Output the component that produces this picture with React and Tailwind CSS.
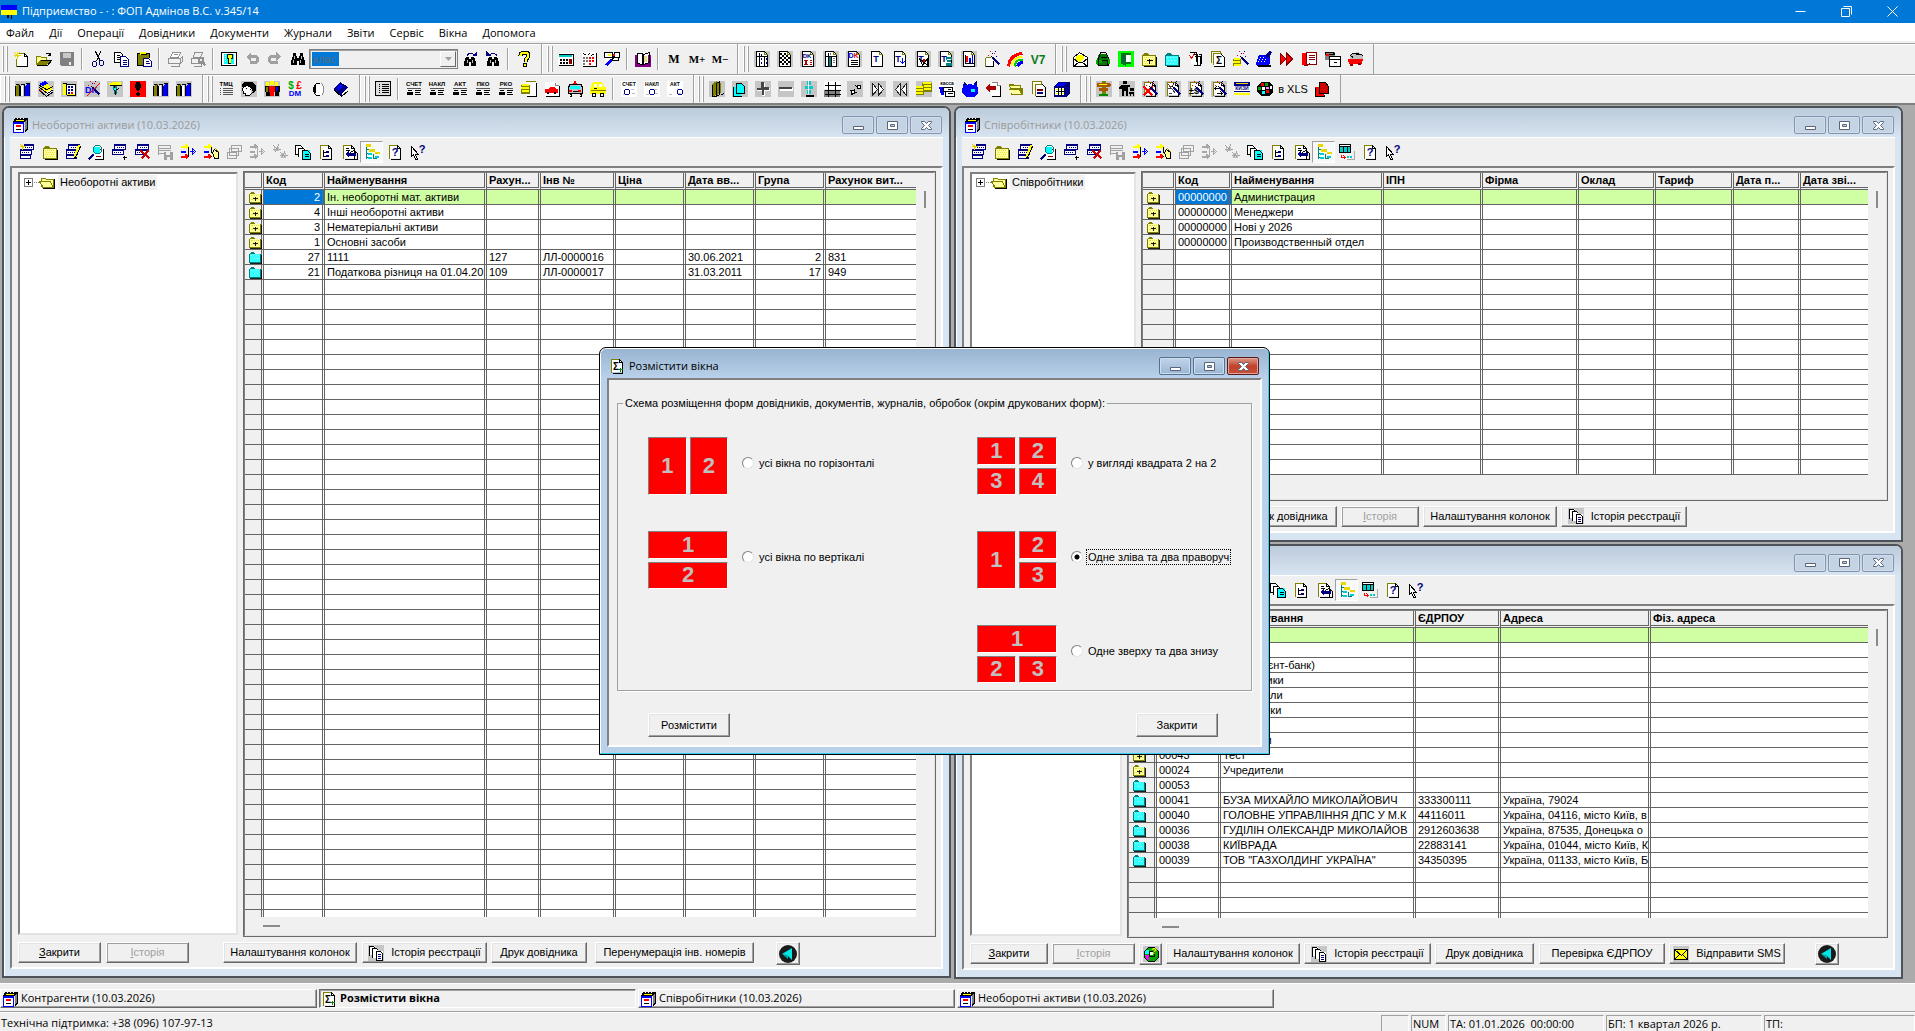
import React from 'react';

const UI = 'font-["Open_Sans","Noto_Sans",sans-serif]';

/* ---------- pixel icons, 16x16 grid ---------- */
// [color, path] is a fill, [color, path, width] a stroke, ['t', color, text, x, y, size] a caption

const BG = ['#c6c6c6', 'M0 0h16v16h-16z'];
const WBG = ['#fff', 'M0 0h16v16h-16z'];
const PAGE = [
  ['#fff', 'M2 1h8l4 4v11h-12z'],
  ['#000', 'M2 0h8l3 3v12h-11z', 1],
  ['#808000', 'M10 0v3h3', 1],
];
const SHEET = [
  ['#fff', 'M3 2h7l3 3v9h-10z'],
  ['#808000', 'M2 14v-13h8', 1],
  ['#000', 'M3 15h10v-11l-3 -3v3h3', 1],
];
const WAND = [
  ['#000080', 'M8 6l7 7', 2],
  ['#000', 'M7 5l2 2', 1],
  ['#f00', 'M6 0h1v1h-1zM10 2h1v1h-1zM4 4h1v1h-1z'],
  ['#000080', 'M8 2h1v1h-1zM11 0h1v1h-1zM12 5h1v1h-1z'],
];
const FOLDER = [
  ['#808000', 'M1 4h1v-1h1v-1h4v1h1v1h7v11h-14z'],
  ['#ffff9c', 'M2 5h12v9h-12z'],
  ['#e8e040', 'M3 6h1v1h-1zM5 6h1v1h-1zM7 6h1v1h-1zM9 6h1v1h-1zM11 6h1v1h-1zM4 8h1v1h-1zM6 8h1v1h-1zM8 8h1v1h-1zM10 8h1v1h-1zM12 8h1v1h-1zM3 10h1v1h-1zM5 10h1v1h-1zM7 10h1v1h-1zM9 10h1v1h-1zM11 10h1v1h-1zM4 12h1v1h-1zM6 12h1v1h-1zM8 12h1v1h-1zM10 12h1v1h-1z'],
  ['#000', 'M15 5v10h-13', 1],
];
const CFOLDER = [
  ['#008080', 'M1 4h1v-1h1v-1h4v1h1v1h7v11h-14z'],
  ['#3ff', 'M2 5h12v9h-12z'],
  ['#b0ffff', 'M3 6h1v1h-1zM6 6h1v1h-1zM9 6h1v1h-1zM12 6h1v1h-1zM4 9h1v1h-1zM7 9h1v1h-1zM10 9h1v1h-1zM3 12h1v1h-1zM6 12h1v1h-1zM9 12h1v1h-1z'],
  ['#000', 'M15 5v10h-13', 1],
];
const CARDS = [
  ['#000080', 'M3 0h12v6h-12z'],
  ['#fff', 'M4 2h10v3h-10z'],
  ['#000080', 'M1 5h12v6h-12z'],
  ['#fff', 'M2 7h10v3h-10z'],
  ['#000080', 'M6 3h1v1h-1zM8 3h1v1h-1zM10 3h1v1h-1zM12 3h1v1h-1zM3 8h1v1h-1zM5 8h1v1h-1zM7 8h1v1h-1zM9 8h1v1h-1z'],
];
const BINOC = [
  ['#000', 'M3 2h3v3h1v2h2v-2h1v-3h3v3l2 5v4h-6v-4h-2v4h-6v-4l2 -5z'],
  ['#c0c0c0', 'M4 5h1v3h-1zM3 9h1v3h-1zM11 5h1v3h-1zM10 9h1v3h-1z'],
];
const SMALL_BINOC = [
  ['#000', 'M4 6h3v2h2v-2h3l2 5v4h-5v-4h-2v4h-5v-4z'],
  ['#c0c0c0', 'M5 9h1v3h-1zM10 9h1v3h-1z'],
];
const arrows3 = (a, b, c, d) => [
  [a, 'M0 2h5M5 0l2 2l-2 2', 2],
  [b, 'M0 7h5', 2],
  [c, 'M0 12h5M5 10l2 2l-2 2', 2],
  ['#000', 'M8 2v10', 1],
  [d, 'M9 7h4M12 4l3 3l-3 3z', 1],
];
const MAN = ['#000', 'M2 9h4v1h-4zM1 11h6v3h-6zM9 9h6v1h-6zM9 11h5v1h-5zM9 13h6v1h-6z'];
const doc = (label, extra) => [['t', '#000', label, 8, 5, 6], ...(extra || [MAN, ['#555', 'M1 7h14v1h-14z']])];
const docW = (label, x) => [WBG, ['t', '#000', label, 8, 5, 5], ['#bbb', 'M10 8h3v1h-3zM2 13h3v1h-3zM11 12h3v1h-3z'], ['#000080', `M${x} 8h3l1 1v3l-1 1h-3l-1 -1v-3z`, 1]];
const BINDERS = [
  BG,
  ['#808000', 'M1 5l2 -2h2v12h-4z'],
  ['#000', 'M4 4h1v11h-1zM0 5h1v10h-1zM1 3h3v1h-3z'],
  ['#fff', 'M6 6l2 -3v12h-2z'],
  ['#000', 'M5 5h1v10h-1zM9 3h1v12h-1zM6 3h3v1h-3z'],
  ['#00f', 'M10 6l3 -4h1v13h-4z'],
  ['#000080', 'M14 2h1v13h-1z'],
  ['#000', 'M11 2h4v1h-4z'],
];
const T = x => [...PAGE, ['t', '#000080', 'T', x, 11, 9]];

const ICONS = {
  flag: [['#00f', 'M0 1h16v5h-16z'], ['#ff0', 'M0 6h16v5h-16z'], ['#000', 'M6 11h2v3h-2zM10 11h1v4h-1z']],
  new: [['#fff', 'M3 2h8l3 3v10h-11z'], ['#808000', 'M3 7v8M5 2h6', 1], ['#000', 'M3 15h11v-10h-3v-3l3 3', 1], ['#e8d800', 'M4 0v7M0 4h7M1 1l5 5M6 1l-5 5', 1]],
  open: [['#808000', 'M0 5h4l1 1h6v8h-11z'], ['#ff9', 'M1 6h3l1 1h5v2h-6l-3 4z'], ['#808000', 'M4 9h11l-4 5h-10z'], ['#000', 'M4 9h11l-4 5h-11M9 3q3 -3 5 1M14 1v3h-3', 1]],
  save: [['#808080', 'M1 1h14v14h-13l-1 -1z'], ['#c8c8c8', 'M4 2h8v5h-8z'], ['#eee', 'M10 11h2v3h-2z']],
  cut: [['#000', 'M5 0l5 10M10 0l-4 10', 1], ['#000080', 'M3 10h2l1 1v3l-1 1h-2l-1 -1v-3zM10 9h2l1 1v3l-1 1h-2l-1 -1v-3z', 1]],
  copy: [['#fff', 'M1 1h8v10h-8z'], ['#000', 'M1 1h6l2 2v8h-8zM3 4h3M3 6h4M3 8h4', 1], ['#fff', 'M7 5h8v10h-8z'], ['#000080', 'M7 5h5l3 3v7h-8zM9 9h4M9 11h4M9 13h4', 1]],
  paste: [['#808000', 'M1 2h12v12h-12z'], ['#000', 'M1 2h12v12h-12z', 1], ['#ff0', 'M4 1h6v3h-6z'], ['#000', 'M4 3h6', 1], ['#fff', 'M7 7h8v8h-8z'], ['#000080', 'M7 7h5l3 3v5h-8zM9 10h3M9 12h4', 1]],
  print: [['#fff', 'M4 2h9v5h-9z'], ['#909090', 'M5 1h8l-2 5h-8zM1 7h12v5h-12zM13 7l2 -2v5l-2 2M3 12h9v3h-9M6 3h4', 1]],
  preview: [['#909090', 'M4 1h8l-2 5h-7zM1 7h11v5h-11zM3 12h8v3h-8', 1], ['#eee', 'M9 6h4v4h-4z'], ['#909090', 'M8 6h4v4h-4zM12 10l3 4', 2]],
  key: [['#fff', 'M0 1h16v14h-16z'], ['#000', 'M0 1h15v13h-15z', 1], ['#0ff', 'M3 3h10v10h-10z'], ['#fff', 'M4 4h1v1h-1zM4 6h1v1h-1zM4 8h1v1h-1zM4 10h1v1h-1z'], ['#000', 'M6 3h6v5h-2v5h-3v-5h-1z'], ['#ff0', 'M7 4h4v3h-1v5h-2v-5h-1z']],
  undo: [['#a0a0a0', 'M6 5h5q2 0 2 3t-2 3h-6', 3], ['#a0a0a0', 'M7 1v9l-5 -4z']],
  redo: [['#a0a0a0', 'M9 5h-5q-2 0 -2 3t2 3h6', 3], ['#a0a0a0', 'M9 1v9l5 -4z']],
  binoc: BINOC,
  binocNext: [...SMALL_BINOC, ['#000080', 'M4 5q2 -5 8 -2', 1], ['#000080', 'M10 5h5v-5z']],
  binocPrev: [...SMALL_BINOC, ['#000080', 'M12 5q-2 -5 -8 -2', 1], ['#000080', 'M6 5h-5v-5z']],
  help: [['#000', 'M4 4q0 -3 4 -3t4 3q0 2 -3 4v2', 4], ['#ff0', 'M4 4q0 -3 4 -3t4 3q0 2 -3 4v2', 2], ['#000', 'M7 12h4v4h-4z'], ['#ff0', 'M8 13h2v2h-2z']],
  calc: [['#fff', 'M0 2h16v12h-16z'], ['#000', 'M0 14h15v-12M0 3h15', 1], ['#0cc', 'M1 4h13v2h-13z'], ['#000', 'M2 8h2v2h-2zM5 8h2v2h-2zM8 8h2v2h-2zM2 11h2v2h-2zM5 11h2v2h-2zM8 11h2v2h-2z'], ['#800', 'M11 8h3v5h-3z']],
  calc2: [['#fff', 'M1 1h14v14h-14z'], ['#000', 'M1 15h14v-14M2 2l3 2M6 4l2 -2M10 4l3 -2', 1], ['#777', 'M2 6h2v2h-2zM5 6h2v2h-2zM2 9h2v2h-2zM5 9h2v2h-2zM2 12h2v2h-2z'], ['#f00', 'M8 6h2v2h-2zM11 6h2v2h-2zM8 9h2v2h-2zM11 9h2v2h-2zM8 12h2v2h-2z']],
  kit: [['#fff', 'M1 2h14v8h-14z'], ['#000', 'M0 1h8v5h-8zM10 1h5v5h-5zM8 9h6v-4', 1], ['#f00', 'M9 3h2v3h-2z'], ['#ff0', 'M4 3h3v2h-3z'], ['#00f', 'M7 8l-5 6', 3], ['#000', 'M10 5l-3 4', 2]],
  book: [['#800080', 'M0 4h3v9h4l1 1l1 -1h4v-9h3v12h-16z'], ['#fff', 'M2 2l5 -1l1 2l5 -2v11l-5 1l-6 -1z'], ['#000', 'M2 2v10l5 1v-11zM8 3v10l6 -2v-10z', 1], ['#e8e080', 'M9 5h3v6h-3z']],
  m: [['t', '#000', 'M', 8, 12, 12, 'serif']],
  mp: [['t', '#000', 'M+', 8, 12, 11, 'serif']],
  mm: [['t', '#000', 'M−', 8, 12, 11, 'serif']],
  grid1: [BG, ...PAGE, ['#000', 'M5 1v14M10 4v11M2 5h11', 1], ['#000080', 'M7 3h1v2h-1zM7 7h1v2h-1zM7 11h1v2h-1zM12 7h1v2h-1zM12 11h1v2h-1z']],
  check: [BG, ...PAGE, ['#000', 'M3 2h2v2h-2zM7 2h2v2h-2zM5 4h2v2h-2zM9 4h2v2h-2zM3 6h2v2h-2zM7 6h2v2h-2zM11 6h2v2h-2zM5 8h2v2h-2zM9 8h2v2h-2zM3 10h2v2h-2zM7 10h2v2h-2zM11 10h2v2h-2zM5 12h2v2h-2zM9 12h2v2h-2z']],
  dk1: [BG, ...PAGE, ['t', '#000080', 'DK', 7, 7, 6], ['#a00', 'M4 9h4v1h-4zM5 10h2v3h-2zM4 13h4v1h-4zM10 9h2v1h-2zM10 11h2v1h-2zM10 13h2v1h-2z']],
  grid2: [BG, ...PAGE, ['#008080', 'M5 6h3v9h-3z'], ['#000', 'M5 1v14M8 5v10M2 5h11', 1], ['#777', 'M10 7h2v1h-2zM10 9h2v1h-2zM10 11h2v1h-2zM7 2h1v2h-1z']],
  dk2: [BG, ...PAGE, ['t', '#00f', 'D', 5, 7, 7], ['t', '#f00', 'K', 10, 7, 7], ['#000', 'M4 9h7M4 11h7M4 13h7', 1]],
  t1: T(7), t2: [...T(6), ['#00f', 'M10 6v6M8 10l2 2l2 -2', 1]],
  t3: [BG, ...T(6), ['#000', 'M4 7l8 7v-7l-5 7z', 1], ['#c00', 'M8 8h2v3h-2z']],
  t4: [BG, ...T(6), ['#008080', 'M8 6h6v3h-1v3h1v3h-6v-3h1v-3h-1z'], ['#fff', 'M9 8h4v1h-4zM9 11h4v1h-4z']],
  chart: [BG, ...PAGE, ['#000', 'M4 3v9h8', 1], ['#f00', 'M5 5h2v6h-2z'], ['#00f', 'M8 7h2v5h-2zM11 4h1v8h-1z']],
  wand: [['#fff', 'M1 7h8v8h-8z'], ['#808000', 'M1 6h5M1 6v9', 1], ['#000', 'M1 15h8v-6', 1], ...WAND],
  rainbow: [['#f00', 'M1 15q1 -12 14 -13', 3], ['#ff0', 'M4 15q1 -9 11 -10', 2], ['#0c0', 'M7 15q1 -7 8 -7', 2], ['#00f', 'M10 15q1 -4 5 -4', 3]],
  v7: [['t', '#0a7a1a', 'V7', 8, 13, 12]],
  mail: [['#fff', 'M1 6l7 -5l7 5v9h-14z'], ['#ff0', 'M4 5l8 -2v5l-4 3l-5 -2z'], ['#000', 'M1 6l6 -5l8 5v9h-14zM1 7l5 4l-5 4M15 7l-5 4l5 4M6 11h4', 1]],
  bag: [['#070', 'M4 3h8l2 5v6h-12v-6z'], ['#000', 'M5 1h5l3 5v8h-10v-7zM5 6h6M5 9h7v4', 1], ['#0a0', 'M4 9h3v3h-3zM1 9h2v4h-2zM13 8h2v5h-2z']],
  door: [['#0f0', 'M0 0h16v16h-16z'], ['#070', 'M3 2h10v11h-10z'], ['#fff', 'M8 4h5v7h-5z'], ['#0a6a3a', 'M3 2l5 3v10l-5 -3z']],
  folderPlus: [...FOLDER, ['#000', 'M8 7v5M5 9h6', 1]],
  folderCyan: CFOLDER,
  folderYellow: FOLDER,
  pages: [['#fff', 'M4 1h9v12h-9z'], ['#000', 'M2 1h7v9M5 3h5v10M7 5h6v9h-7M11 3h3v9', 1], ['#f00', 'M2 4l2 3l3 -5', 1]],
  sigma: [['#fff', 'M3 3h11v12h-11z'], ['#808000', 'M1 11v-11h9v2M3 13v-11h8', 1], ['#000', 'M3 15h11v-9l-3 -3', 1], ['t', '#000', 'Σ', 9, 13, 10]],
  coinsWand: [['#808000', 'M0 8h8v7h-8z'], ['#ff0', 'M1 7h6v2h-6zM0 10h7v2h-7zM1 13h7v2h-7z'], ...WAND],
  tax: [['#00f', 'M3 4h8l3 3v6l-4 2h-9l-1 -2z'], ['#fff', 'M4 6h1v1h-1zM7 6h1v1h-1zM3 8h1v1h-1zM6 8h1v1h-1zM9 8h1v1h-1zM2 10h1v1h-1zM5 10h1v1h-1zM8 10h1v1h-1z'], ['#000080', 'M9 5l4 -5l3 1l-3 6z'], ['#000', 'M1 14h13', 2]],
  ff: [['#800000', 'M1 1l6 7l-6 7zM7 1l7 7l-7 7z'], ['#f00', 'M2 4l4 4l-4 4zM8 4l4 4l-4 4z']],
  redbook: [['#f00', 'M0 2h5v12h-5z'], ['#fff', 'M4 1h10v12h-10z'], ['#800', 'M4 1h10v12h-10zM6 4h6M6 6h6M6 8h6M1 14h4l2 -2', 1]],
  files: [['#808080', 'M0 1h10v8h-10z'], ['#000', 'M0 1h8l1 2h-9z', 1], ['#f00', 'M1 3h3v2h-3z'], ['#fff', 'M4 5h12v11h-12z'], ['#000', 'M4 5h11v10h-11zM4 8h11M8 11h3', 1]],
  bus: [['#c0c0c0', 'M2 3l8 -2l5 3v4l-13 5z'], ['#000', 'M1 5l3 -3h5l6 2M3 5l2 1M7 3h3', 1], ['#f00', 'M0 8h15l-1 5h-13z'], ['#800', 'M2 13h3v2h-3zM10 12h3v2h-3z']],

  binders: BINDERS,
  cubes: [BG, ['#00f', 'M1 3l6 -3l4 3l-4 3z'], ['#ff0', 'M4 6l5 -3l5 3v3l-5 3l-5 -3z'], ['#f00', 'M1 8l5 4v3l-5 -5z'], ['#fff', 'M8 11l7 -3v2l-6 4z'], ['#000', 'M1 4l7 4l7 -3M1 6l8 6l6 -4M8 15l7 -5M1 9l7 6', 1]],
  ledger: [BG, ['#ff0', 'M2 3h12v11h-12z'], ['#fff', 'M5 4h9v9h-9z'], ['#000', 'M1 2h4v11M5 3h9v11h-9', 1], ['#000080', 'M7 5h2v2h-2zM10 5h2v2h-2zM7 8h2v2h-2zM10 8h2v2h-2zM7 11h2v2h-2z'], ['#f00', 'M10 11h2v2h-2z']],
  dkw: [BG, ['t', '#00f', 'DК', 7, 12, 9], ...WAND, ['#f00', 'M2 15l13 -13', 1]],
  hammer: [BG, ['#ff0', 'M1 3l5 -2h8v3h-12z'], ['#008080', 'M6 4h4v9h-3z'], ['#000', 'M2 4h12M7 5l1 9M9 8l3 -1', 1], ['#0ff', 'M7 7h2v2h-2z']],
  alert: [['#f00', 'M0 0h16v16h-16z'], ['#000', 'M6 1h4v2h1v3l-2 4h-2l-2 -4v-3h1zM7 11h2v1h1v2h-1v1h-2v-1h-1v-2h1z']],
  tmc: doc('ТМЦ', [['#555', 'M2 7h1v1h-1zM5 7h10v1h-10zM2 9h1v1h-1zM5 9h10v1h-10zM2 11h1v1h-1zM5 11h10v1h-10zM2 13h1v1h-1zM5 13h10v1h-10z']]),
  face: [BG, ['#fff', 'M2 5l4 -1l5 3l-1 5l-3 3h-3l-1 -3l-2 -3z'], ['#000', 'M1 3l3 -2h7l4 3v6l-3 2l-1 -4l-3 -2l-2 -1l-3 1l-1 2z'], ['#000', 'M1 6v3l1 1v2h2v2h4l3 -3M4 7h1M8 8h1', 1]],
  people: [BG, ['#ff0', 'M2 1h3v4h-3zM6 0h4v4h-4zM11 1h3v4h-3z'], ['#000', 'M1 5h5v10h-4v-4h-1zM10 5h6v6h-1v4h-4z'], ['#f00', 'M5 5h6v6h-1v4h-4v-4h-1z'], ['#00f', 'M12 6h2v4h-2z'], ['#808000', 'M2 6h2v5h-2z']],
  money: [['t', '#0a0', '$', 4, 8, 10], ['t', '#f00', '£', 12, 8, 10], ['t', '#00f', 'DM', 8, 15, 8]],
  moon: [['#fff', 'M6 2h5l3 4v5l-3 3h-5z'], ['#000', 'M9 2h-3l-2 2l-1 4l1 4l2 2h3', 1], ['#000', 'M4 4h2v8h-2z'], ['#888', 'M11 2l2 3v6l-2 3', 1]],
  bluebook: [['#000080', 'M0 8l7 -7l8 5l-6 9z'], ['#00f', 'M3 7l4 -4l3 2l-4 4z'], ['#fff', 'M9 12l6 -5v2l-6 5z'], ['#000', 'M1 9l7 6l7 -6', 1]],
  list: [['#ddd', 'M1 1h15v15h-15z'], ['#000', 'M0 0h15v14h-15zM6 3h7M6 5h7M6 7h7M6 9h7M6 11h7M3 3h1M3 5h1M3 7h1M3 9h1M3 11h1', 1]],
  schet: doc('СЧЕТ'), nakl: doc('НАКЛ'), akt: doc('АКТ'), pko: doc('ПКО'), rko: doc('РКО'),
  coinsPage: [['#fff', 'M5 1h10v14h-10z'], ['#808000', 'M4 0h10', 1], ['#000', 'M5 15h10v-14', 1], ['#808000', 'M0 4h9v9h-9z'], ['#ff0', 'M1 3h7v2h-7zM0 6h8v2h-8zM1 9h7v2h-7z']],
  car: [['#fff', 'M1 1h10l4 4v10h-14z'], ['#888', 'M11 1v3h3', 1], ['#000', 'M1 15h14v-11', 1], ['#f00', 'M1 8h3l2 -2h4l2 2h2v4h-13z'], ['#000', 'M3 11h2v2h-2zM10 11h2v2h-2z']],
  ambul: [['#c0c0c0', 'M1 4h14v8h-14z'], ['#0ff', 'M3 5h10v3h-10z'], ['#f00', 'M7 0h2v2h1v2h-4v-2h1zM2 9h3v2h-3zM11 9h3v2h-3z'], ['#000', 'M2 3h12l1 4v5h-14v-5zM2 13h2v2h-2M12 13h2v2h-2M5 10h6', 1]],
  taxi: [['#ff0', 'M3 1h9l2 5h2v7h-16v-5z'], ['#fff', 'M4 3h3v3h-3zM9 3h3v3h-3z'], ['#808000', 'M0 9h15', 1], ['#000', 'M3 7h3M2 12h3v3h-3zM10 12h3v3h-3z', 1]],
  schet2: docW('СЧЕТ', 4), nakl2: docW('НАКЛ', 6), akt2: docW('АКТ', 11),
  olive: [BG, ['#808000', 'M3 3l5 -3v13l-4 3h-1z'], ['#808000', 'M8 2h4v10l-4 2z'], ['#000', 'M3 3v12h4v-13l3 -2v13l-3 2M12 13l3 -1', 1]],
  cyanPages: [BG, ['#0ff', 'M1 6h8v9h-8z'], ['#000', 'M1 5v10h8M4 2h5l3 3v7h-8z', 1], ['#0ff', 'M5 3h5l2 3v6h-7z']],
  plus: [BG, ['#fff', 'M7 2h3v5h5v3h-5v5h-3v-5h-5v-3h5z'], ['#444', 'M6 1h3v5h5v3h-5v5h-2v-5h-5v-2h4z']],
  minus: [BG, ['#fff', 'M2 7h13v3h-13z'], ['#444', 'M1 6h13v2h-13z']],
  balance: [BG, ['#0cc', 'M6 0h4v4h-4zM4 5h8v3h-8zM6 9h4v4h-4z'], ['#fff', 'M7 0h1v13h-1z'], ['#000', 'M4 14h8', 2]],
  hash: [['#fff', 'M0 0h16v8h-16z'], ['#808080', 'M0 9h16v7h-16z'], ['#000', 'M4 0v15M11 0v15M0 4h16M0 9h16M0 13h16', 1]],
  gears: [BG, ['#000', 'M3 10h1M6 8h1M9 6h1M12 4h1M3 13h2M7 11h2M11 7h2M3 9l3 5M8 4l5 4', 1], ['#fff', 'M4 9h3v3h-3zM10 4h3v3h-3z'], ['#000', 'M4 9h3v3h-3zM10 4h3v3h-3z', 1]],
  fwd: [BG, ['#fff', 'M3 3l5 5l-5 5zM9 3l5 5l-5 5z'], ['#222', 'M2 2v12l5 -6zM8 2v12l5 -6z', 1]],
  back: [BG, ['#fff', 'M13 3l-5 5l5 5zM7 3l-5 5l5 5z'], ['#222', 'M13 2v12l-5 -6zM7 2v12l-5 -6z', 1]],
  coins: [BG, ['#808000', 'M0 6h8v8h-8zM6 2h10v9h-9z'], ['#ff0', 'M0 5h7v2h-7zM0 8h7v2h-7zM0 11h7v2h-7zM7 1h8v2h-8zM8 4h7v2h-7zM8 7h7v2h-7z']],
  kassa: [WBG, ['t', '#000', 'касса', 8, 4, 5], ['#00f', 'M0 6h5v8h-3z'], ['#000', 'M4 6h9v4h-9zM6 10h9v5h-9zM8 8h3M8 12h5', 1]],
  pig: [['#00f', 'M1 3l3 1l4 -1l4 1l2 -3l2 6v6l-4 3h-7l-5 -4z'], ['#000080', 'M2 1l3 3h-3zM11 3l4 -3v4z'], ['#0ff', 'M9 8h4v3h-4z']],
  backPage: [['#fff', 'M6 1h6l3 3v11h-9z'], ['#888', 'M6 1h6v3h3', 1], ['#000', 'M6 15h9v-11', 1], ['#a00', 'M0 7l5 -5v3h6v4h-6v3z']],
  openFolder: [['#808000', 'M1 3h4l1 1h7v3h2v7h-12z'], ['#ffff9c', 'M2 5h10v2h-9zM1 8h10l2 5h-9z'], ['#808000', 'M0 8h11l3 6', 1]],
  twoPages: [['#fff', 'M1 1h9v11h-9z'], ['#808000', 'M1 12v-12h9v2M4 14v-11h7', 1], ['#fff', 'M5 4h8v11h-8z'], ['#000', 'M4 15h10v-9l-3 -3', 1], ['#800000', 'M6 8h6v2h-6z'], ['#000080', 'M6 11h6v2h-6z']],
  server: [['#000080', 'M4 1h12v11l-4 4h-12v-11z'], ['#00f', 'M4 2h8l-2 3h-8z'], ['#fff', 'M1 7h9v7h-9z'], ['#ff0', 'M1 8h9v1h-9zM1 12h9v1h-9z'], ['#000', 'M4 6v8M7 6v8M1 10h9', 1]],
  sign: [BG, ['#808000', 'M6 0h4v15h-4z'], ['#a50', 'M1 2h12l2 2l-2 2h-12z'], ['#ff0', 'M3 3h8v1h-8zM4 8h7v1h-7z'], ['#a50', 'M3 7h9v3h-9z'], ['#080', 'M3 13h9v2h-9z']],
  walk: [BG, ['#000', 'M4 0h4v3h-4zM2 4h9v2h-2v9h-2v-5h-2v5h-2v-7h-3v-2zM11 7h4v3h-4zM10 11h5v4h-1v-2h-2v2h-1z']],
  wx: [BG, ...SHEET, ['#f00', 'M1 5l9 9M10 5l-9 9', 2], ...WAND],
  wgear: [BG, ...SHEET, ['#444', 'M3 3l7 9M8 3l-5 5M3 12h3M2 7h4', 1], ...WAND],
  wdollar: [BG, ...SHEET, ['t', '#000', '±$', 6, 13, 9], ...WAND],
  wswap: [BG, ...SHEET, ['#000', 'M3 7h6M5 5l-2 2l2 2M5 12h6M9 10l2 2l-2 2', 1], ...WAND],
  rosa: [['#000080', 'M0 1h16v4h-16zM0 10h16v1h-16z'], ['#fff', 'M0 5h16v5h-16z'], ['t', '#000080', 'КИЗИ', 8, 9, 5], ['#ff0', 'M0 12h16v2h-16z'], ['#e8d800', 'M2 2h12v1h-12z']],
  rubik: [['#000', 'M4 1h8l4 3v8l-4 3h-8l-4 -4v-6z'], ['#f00', 'M4 2h3v3h-3zM9 9h3v3h-3z'], ['#0a0', 'M8 2h3v3h-3zM1 6h3v3h-3z'], ['#fff', 'M5 6h3v3h-3zM13 5h2v3h-2z'], ['#f8f', 'M9 6h3v2h-3z'], ['#0ff', 'M5 10h3v3h-3z']],
  pdf: [['#f00', 'M1 6h9v10h-9z'], ['#c00', 'M5 1h5l4 4v8h-8z'], ['#000', 'M5 1h6l3 4v7h-9zM1 6v9h9v-2', 1]],

  w1: [...CARDS, ['#000080', 'M1 11h11v4h-11z'], ['#fff', 'M2 12h9v2h-9z'], ['#f0f0f0', 'M0 0h5v5h-5z'], ['#e8d000', 'M3 0v5M0 2h6M1 0l4 4', 1]],
  w3: [...CARDS, ['#000080', 'M1 11h11v4h-11z'], ['#fff', 'M2 12h9v2h-9z'], ['#ff0', 'M14 1l-5 12', 3], ['#000', 'M15 2l-5 11l-2 1', 1]],
  w4: [['#fff', 'M6 3h10v12h-10z'], ['#000', 'M6 15h9v-11', 1], ['#800000', 'M8 12h5v1h-5zM8 5h5v1h-5z'], ['#0ff', 'M6 3h6v6h-6z'], ['#008080', 'M7 1h4l2 2v4l-2 2h-4l-2 -2v-4z', 1], ['#000080', 'M5 10l-5 5', 2]],
  w5: [...CARDS, ['#000', 'M13 11v4M11 13h4', 1]],
  w6: [...CARDS, ['#c00', 'M6 6l9 8M14 6l-7 8', 2]],
  w7: [['#a0a0a0', 'M1 1h12v3h-12zM1 6h12M1 9h5M1 4v6', 1], ['#a0a0a0', 'M7 8h9v8h-9z'], ['#eee', 'M9 8h4v3h-4zM10 13h3v3h-3z']],
  w8: arrows3('#ff0', '#00f', '#f00', '#00f'),
  w9: [...arrows3('#ff0', '#00f', '#f00', '#c0b000'), ['#ffff9c', 'M9 7l4 -2l2 3v7h-4l-3 -4z'], ['#000', 'M9 8l2 -3l4 3v6h-4z', 1]],
  w10: [['#a0a0a0', 'M5 1h10v6h-10zM3 4h9v7h-9zM1 8h9v6h-9zM3 11h5', 1]],
  w11: arrows3('#a8a8a8', '#a8a8a8', '#a8a8a8', '#a8a8a8').map(s => ['#a8a8a8', s[1], s[2]]),
  w12: [['#a0a0a0', 'M1 1l6 6M6 0l-3 8M0 5h8M8 8l6 6M12 7l-3 7M7 11h8', 1], ['#b8b8b8', 'M2 3h4v3h-4zM9 9h4v4h-4z', 1]],
  w13: [['#fff', 'M0 1h7v9h-7zM4 4h7v9h-7z'], ['#000', 'M0 10v-9h5l2 2v1M3 12v-8h5l2 2M0 10h2', 1], ['#0ff', 'M7 6h8v9h-8z'], ['#000', 'M7 6h5l3 3v6h-8zM9 10h4M9 12h4', 1]],
  w14: [...SHEET, ['#000', 'M5 5v7h3M5 8h2', 1], ['#000080', 'M8 7h3v2h-3zM8 11h3v2h-3z']],
  w15: [...SHEET, ['#000', 'M4 4h3M4 6h4', 1], ['#000080', 'M4 10l4 -3v2h7v3h-7v2z'], ['#000', 'M9 8l3 -2l4 3v6h-8', 1]],
  w16: [['#008080', 'M2 2v12M2 5h3M2 9h3M2 13h3M9 9v5h3', 1], ['#e8d800', 'M2 0h5v3h-5zM5 5h6v3h-6zM11 8h5v2h-5z'], ['#0cc', 'M4 9h4v2h-4zM4 13h4v2h-4zM11 12h4v2h-4z']],
  wgrid: [['#fff', 'M0 0h12v9h-12z'], ['#0cc', 'M1 3h10v5h-10z'], ['#000', 'M0 0h11v8h-11zM0 2h11M4 2v6M8 2v6', 1], ['#f00', 'M2 10v3h4M4 11l2 2l-2 2', 1], ['#0cc', 'M8 12h2v2h-2zM11 12h2v2h-2z'], ['#aaa', 'M7 15h8v-9', 1]],
  w17: [...SHEET, ['t', '#000080', '?', 8, 12, 11]],
  w18: [['#fff', 'M1 2l7 7h-3l2 5h-2l-2 -4l-2 2z'], ['#000', 'M1 2v10l2 -2l2 5h2l-2 -5h3z', 1], ['t', '#000080', '?', 12, 9, 11]],
  cardfile: [['#00f', 'M1 5h11v11h-11z'], ['#000', 'M3 1h13v11l-3 3v-10h-12z'], ['#808080', 'M13 4l2 -2v9l-2 2z'], ['#fff', 'M2 7h9v8h-9z'], ['#f00', 'M4 8h5v2h-5z'], ['#ff0', 'M4 3h8v1h-8z'], ['#000', 'M4 12h5v1h-5z'], ['#fff', 'M5 1h1v1h-1zM8 1h1v1h-1zM11 1h1v1h-1z']],
  sigmaPage: [...SHEET, ['t', '#000', 'Σ', 7, 12, 10], ['#080', 'M11 9v4M9 11h4', 1]],
  history: [BG, ['#fff', 'M1 1h6v9h-6zM4 4h6v9h-6z'], ['#000', 'M1 10v-9h4l2 2M4 12v-9h4l2 2', 1], ['#fff', 'M8 6h7v9h-7z'], ['#000', 'M8 6h4l2 2v7h-6z', 1], ['#000080', 'M10 9h3v1h-3zM10 11h3v1h-3zM10 13h3v1h-3z']],
  sms: [BG, ['#ff0', 'M1 3h14v10h-14z'], ['#000', 'M1 3h13v10h-13zM1 3l7 6l6 -6M1 13l5 -5M14 13l-5 -5', 1]],
  ball: [BG, ['#0a0', 'M5 1h6l4 4v6l-4 4h-6l-4 -4v-6z'], ['#f0f', 'M2 9h4v5h-2z'], ['#0ff', 'M2 4h4v4h-4z'], ['#000', 'M5 1h6l4 4v6l-4 4h-6l-4 -4v-6zM6 5h5v5h-5z', 1], ['#fff', 'M7 6h3v3h-3z'], ['t', '#ff0', '?', 11, 8, 9]],
};

const Icon = ({ name, size = 16 }) => (
  <svg width={size} height={size} viewBox="0 0 16 16" shapeRendering="crispEdges" className="block shrink-0 overflow-visible" aria-hidden="true">
    {ICONS[name].map((s, i) => {
      if (s[0] === 't') {
        return (
          <text key={i} x={s[3]} y={s[4]} fontSize={s[5]} fill={s[1]} textAnchor="middle" fontWeight="700" fontFamily={s[6] ? 'Liberation Serif' : 'Liberation Sans'}>
            {s[2]}
          </text>
        );
      }
      return s[2]
        ? <path key={i} d={s[1]} fill="none" stroke={s[0]} strokeWidth={s[2]} transform="translate(.5 .5)" />
        : <path key={i} d={s[1]} fill={s[0]} />;
    })}
  </svg>
);

/* ---------- main toolbars ---------- */

const ROW1 = [
  'new open save | cut copy paste | print preview | key undo redo binoc COMBO binocNext binocPrev | help',
  'calc calc2 kit | book | m mp mm',
  'grid1 check dk1 grid2 dk2 t1 t2 t3 t4 chart wand rainbow v7',
  'mail bag door folderPlus folderCyan pages sigma coinsWand tax ff redbook files bus',
];
const ROW2 = [
  'binders cubes ledger dkw hammer alert binders binders',
  'tmc face people money moon bluebook',
  'list | schet nakl akt pko rko coinsPage car ambul taxi | schet2 nakl2 akt2',
  'olive cyanPages plus minus balance hash gears fwd back coins kassa pig backPage openFolder twoPages server',
  'sign walk wx wgear wdollar wswap rosa rubik XLS pdf',
];

const SearchCombo = () => (
  <div className="flex h-[20px] w-[149px] items-center border border-[#808080] bg-[#f0f0f0] pl-[2px] shadow-[inset_1px_1px_0_#a0a0a0]">
    <input aria-label="Пошук" defaultValue="клас" className="h-[14px] w-[27px] bg-[#0078d7] px-px font-['Liberation_Sans',sans-serif] text-[11px] text-[#5c6b7a] outline-none" />
    <button aria-label="Список" className="ml-auto mr-px flex h-[16px] w-[16px] items-center justify-center border border-b-[#696969] border-l-white border-r-[#696969] border-t-white">
      <svg width="7" height="4" viewBox="0 0 7 4"><path d="M0 0h7l-3.500 4z" fill="#a0a0a0" /></svg>
    </button>
  </div>
);

const Tool = ({ name }) => {
  if (name === '|') return <div className="mx-[3px] h-[22px] w-[2px] border-l border-[#a0a0a0] bg-white" />;
  if (name === 'COMBO') return <SearchCombo />;
  if (name === 'XLS') return <button className="w-[34px] whitespace-nowrap text-center text-[11px]">в XLS</button>;
  return (
    <button aria-label={name} className="flex h-[22px] w-[23px] items-center justify-center">
      <Icon name={name} />
    </button>
  );
};

const Band = ({ items, wide }) => (
  <div className={`flex h-full items-center border-l border-r border-l-white border-r-[#a0a0a0] ${wide ? 'pl-[3px] pr-[7px]' : 'pl-1 pr-[6px]'}`}>
    <div className="mr-px flex h-[26px] gap-[2px]">
      <div className="w-[2px] border-r border-[#a0a0a0] bg-white" />
      <div className="w-[2px] border-r border-[#a0a0a0] bg-white" />
    </div>
    {items.split(' ').map((n, i) => <Tool key={i} name={n} />)}
  </div>
);

/* ---------- shared controls ---------- */

const Push = ({ className = '', disabled, icon, children, label }) => (
  <button
    disabled={disabled}
    aria-label={label}
    className={`flex shrink-0 items-center justify-center whitespace-nowrap border border-b-[#696969] border-l-white border-r-[#696969] border-t-white bg-[#f0f0f0] text-[11px] ${
      disabled
        ? 'text-[#a0a0a0] shadow-[inset_-1px_-1px_0_#a0a0a0,inset_1px_1px_0_#a0a0a0]'
        : 'shadow-[inset_-1px_-1px_0_#a0a0a0,inset_1px_1px_0_#e3e3e3]'
    } ${className}`}
  >
    {icon && <span className="mr-[7px]"><Icon name={icon} /></span>}
    {children}
  </button>
);

const GLYPHS = {
  min: <path d="M.5 6.500h10v3h-10z" />,
  max: <path fillRule="evenodd" d="M.5 1.500h10v8h-10zM3.500 4.500h4v2h-4z" />,
  close: <path d="M.5 1.500h3l2 2l2-2h3v1l-3 3l3 3v1h-3l-2-2l-2 2h-3v-1l3-3l-3-3z" />,
};

const Caption = ({ active }) => (
  <div className="ml-auto flex gap-[2px]">
    {['min', 'max', 'close'].map(k => (
      <button
        key={k}
        aria-label={k}
        className={`flex h-[18px] w-[32px] items-center justify-center rounded-[2px] border ${
          !active
            ? 'border-[#8493b0] bg-[#c5d4e4] shadow-[inset_0_0_0_1px_#d2deeb]'
            : k === 'close'
              ? 'border-[#5a1a1a] bg-linear-to-b from-[#d89a8c] via-[#c1402a] to-[#c9503a] shadow-[inset_0_0_0_1px_#e0a89c]'
              : 'border-[#56708f] bg-linear-to-b from-[#c0d4ea] to-[#9ab6d4] shadow-[inset_0_0_0_1px_#cfdff0]'
        }`}
      >
        <svg width="11" height="11" viewBox="0 0 11 11" fill="#fff" stroke="#5a6478">{GLYPHS[k]}</svg>
      </button>
    ))}
  </div>
);

/* ---------- catalogue windows ---------- */

const Grid = ({ cols, rows, count, rowHead }) => (
  <table className="w-full table-fixed border-separate border-spacing-0 text-[11px]">
    <colgroup>
      <col className={rowHead} />
      {cols.map(c => <col key={c[0]} className={c[1]} />)}
    </colgroup>
    <thead>
      <tr className="h-[17px] bg-[#f0f0f0] text-left">
        <th className="h-[17px] border-b-[3px] border-r-[3px] border-double border-[#646464] p-0" aria-label="Тип" />
        {cols.map(c => (
          <th key={c[0]} className="h-[17px] overflow-hidden whitespace-nowrap border-b-[3px] border-r-[3px] border-double border-[#646464] py-0 pl-[2px] pr-0 text-[11px] font-bold leading-[14px] last:border-r-0">
            {c[0]}
          </th>
        ))}
      </tr>
    </thead>
    <tbody>
      {Array.from({ length: count }, (_, r) => {
        const row = rows[r] || [];
        return (
          <tr key={r} className={r === 0 ? 'bg-[#d0ffa3]' : 'bg-white'}>
            <td className="h-[15px] border-b border-r-[3px] border-b-[#646464] border-r-[#646464] bg-[#f0f0f0] p-0 pl-[3px] [border-right-style:double]">
              {row[0] && <Icon name={row[0] === '+' ? 'folderPlus' : 'folderCyan'} size={14} />}
            </td>
            {cols.map((c, i) => (
              <td
                key={i}
                className={`h-[15px] overflow-hidden whitespace-nowrap border-b border-r-[3px] border-b-[#646464] border-r-[#646464] px-[2px] py-0 leading-[14px] [border-right-style:double] last:border-r-0 ${c[2] ? 'text-right' : ''} ${r === 0 && i === 0 ? 'bg-[#0078d7] text-white' : ''}`}
              >
                {row[i + 1]}
              </td>
            ))}
          </tr>
        );
      })}
    </tbody>
  </table>
);

const TOOLS = 'w1 folderYellow w3 w4 w5 w6 w7 w8 w9 w10 w11 w12 w13 w14 w15 w16 w17 w18';
const STAFF_TOOLS = TOOLS.replace('w16', 'w16 wgrid');
const PARTNER_TOOLS = STAFF_TOOLS.replace('w4', 'w4 w4');

const CatalogWindow = ({ title, root, tree, tools = TOOLS, grid, hScroll, children }) => (
  <section className="flex min-h-0 min-w-0 flex-1 flex-col rounded-t-[7px] border-2 border-[#4d5359] bg-[#d7e4f2] px-[6px] pb-[7px] shadow-[inset_1px_1px_0_#fff]">
    <header className={`-mx-[6px] flex h-[29px] shrink-0 items-center rounded-t-[5px] bg-linear-to-b from-[#bccbda] to-[#d7e4f2] pl-2 pr-[7px] pt-[5px] text-[11px] text-[#9a9a9a] ${UI}`}>
      <Icon name="cardfile" />
      <h2 className="ml-1">{title}</h2>
      <Caption />
    </header>
    <div className="flex min-h-0 flex-1 flex-col border-t border-white bg-[#f0f0f0]">
      <div className="flex h-[28px] shrink-0 items-center pl-[5px]">
        {tools.split(' ').map((n, i) => (
          <button key={i} aria-label={n} className={`flex h-[22px] w-[23px] items-center justify-center ${n === 'w16' ? 'border border-b-white border-l-[#a0a0a0] border-r-white border-t-[#a0a0a0] bg-[#f8f8f8]' : ''}`}>
            <Icon name={n} />
          </button>
        ))}
      </div>
      <div className="flex min-h-0 flex-1 flex-col border-2 border-b-white border-l-[#808080] border-r-white border-t-[#808080] pb-1 pl-[6px] pr-[5px] pt-[3px]">
        <div className="flex min-h-0 flex-1 gap-[5px]">
          <div className={`mt-px mb-[2px] shrink-0 border-2 border-b-[#e3e3e3] border-l-[#808080] border-r-[#e3e3e3] border-t-[#808080] bg-white pl-1 text-[11px] ${tree}`}>
            <div className="flex h-[16px] items-center">
              <svg width="32" height="16" viewBox="0 0 32 16" fill="none" stroke="#808080" shapeRendering="crispEdges" aria-hidden="true">
                <path d="M.5 4.500h8v8h-8z" />
                <path d="M2 8.500h5M4.500 6v5" stroke="#000" />
                <path d="M10 8.500h6" strokeDasharray="1 1" />
                <path d="M17 4h4l1 1h7v8h-11z" fill="#ffff9c" stroke="#808000" />
                <path d="M15 7h11l3 6h-10z" fill="#ffff9c" stroke="#808000" />
                <path d="M30.500 5v9h-12" stroke="#000" />
              </svg>
              <span className="ml-[2px] bg-[#f0f0f0] px-[2px] leading-[15px]">{root}</span>
            </div>
          </div>
          <div className="flex min-w-0 flex-1 border border-[#696969]">
            <div className="flex min-w-0 flex-1 flex-col border border-b-[#e3e3e3] border-l-[#808080] border-r-[#e3e3e3] border-t-[#808080]">
              <div className="flex min-h-0 flex-1">
                <div className="min-h-0 min-w-0 flex-1 basis-0 overflow-hidden"><Grid {...grid} /></div>
                <div className="flex w-[18px] shrink-0 justify-center pt-[18px]">
                  <div className="h-[17px] w-[2px] bg-[#8a8a8a]" />
                </div>
              </div>
              <div className="h-[18px] shrink-0 pt-[8px]">
                {hScroll && <div className={`h-[2px] w-[17px] bg-[#8a8a8a] ${hScroll}`} />}
              </div>
            </div>
          </div>
        </div>
        <div className="mt-[5px] flex h-[21px] shrink-0">{children}</div>
      </div>
    </div>
  </section>
);

const Plane = () => (
  <svg width="20" height="20" viewBox="0 0 20 20" aria-hidden="true">
    <circle cx="10" cy="10" r="9" fill="#1a1a1a" />
    <path d="M4 10l10-6v12l-4-4z" fill="#00e5e5" />
    <path d="M4 10l6 2v3z" fill="#0aa" />
  </svg>
);

const ASSETS = {
  rowHead: 'w-[19px]',
  count: 49,
  cols: [
    ['Код', 'w-[61px]', true], ['Найменування', 'w-[162px]'], ['Рахун...', 'w-[54px]'], ['Інв №', 'w-[75px]'],
    ['Ціна', 'w-[70px]'], ['Дата вв...', 'w-[70px]'], ['Група', 'w-[70px]', true], ['Рахунок вит...', ''],
  ],
  rows: [
    ['+', '2', 'Ін. необоротні мат. активи'],
    ['+', '4', 'Інші необоротні активи'],
    ['+', '3', 'Нематеріальні активи'],
    ['+', '1', 'Основні засоби'],
    ['c', '27', '1111', '127', 'ЛЛ-0000016', '', '30.06.2021', '2', '831'],
    ['c', '21', 'Податкова різниця на 01.04.20', '109', 'ЛЛ-0000017', '', '31.03.2011', '17', '949'],
  ],
};

const STAFF = {
  rowHead: 'w-[33px]',
  count: 19,
  cols: [
    ['Код', 'w-[56px]'], ['Найменування', 'w-[152px]'], ['ІПН', 'w-[99px]'], ['Фірма', 'w-[96px]'],
    ['Оклад', 'w-[77px]'], ['Тариф', 'w-[78px]'], ['Дата п...', 'w-[67px]'], ['Дата зві...', ''],
  ],
  rows: [
    ['+', '00000000', 'Администрация'],
    ['+', '00000000', 'Менеджери'],
    ['+', '00000000', 'Нові у 2026'],
    ['+', '00000000', 'Производственный отдел'],
  ],
};

const PARTNERS = {
  rowHead: 'w-[28px]',
  count: 20,
  cols: [['Код', 'w-[64px]'], ['Найменування', 'w-[195px]'], ['ЄДРПОУ', 'w-[85px]'], ['Адреса', 'w-[150px]'], ['Фіз. адреса', '']],
  rows: [
    ['+', ''],
    ['+', ''],
    ['+', '', 'Банк (клієнт-банк)'],
    ['+', '', 'Замовчники'],
    ['+', '', 'Покупатели'],
    ['+', '', 'Підрядники'],
    ['+', ''],
    ['+', '', 'Магазини'],
    ['+', '00043', 'Тест'],
    ['+', '00024', 'Учредители'],
    ['c', '00053'],
    ['c', '00041', 'БУЗА МИХАЙЛО МИКОЛАЙОВИЧ', '333300111', 'Україна, 79024'],
    ['c', '00040', 'ГОЛОВНЕ УПРАВЛІННЯ ДПС У М.К', '44116011', 'Україна, 04116, місто Київ, в'],
    ['c', '00036', 'ГУДІЛІН ОЛЕКСАНДР МИКОЛАЙОВ', '2912603638', 'Україна, 87535, Донецька о'],
    ['c', '00038', 'КИЇВРАДА', '22883141', 'Україна, 01044, місто Київ, К'],
    ['c', '00039', 'ТОВ "ГАЗХОЛДИНГ УКРАЇНА"', '34350395', 'Україна, 01133, місто Київ, Б'],
  ],
};

/* ---------- arrange windows dialog ---------- */

const Tile = ({ n, className = '' }) => (
  <div className={`flex items-center justify-center border border-b-white border-l-[#808080] border-r-white border-t-[#808080] bg-[#f00] text-[22px] leading-none font-bold text-[#c0c0c0] ${className}`}>{n}</div>
);

const SCHEMES = [
  { id: 'h', text: 'усі вікна по горізонталі', tiles: ['row-span-2', 'row-span-2'] },
  { id: 'q', text: 'у вигляді квадрата 2 на 2', tiles: ['', '', '', ''] },
  { id: 'v', text: 'усі вікна по вертікалі', tiles: ['col-span-2', 'col-span-2'] },
  { id: 'l', text: 'Одне зліва та два праворуч', tiles: ['row-span-2', '', ''] },
  null,
  { id: 't', text: 'Одне зверху та два знизу', tiles: ['col-span-2', '', ''] },
];

const ArrangeDialog = () => (
  <div role="dialog" aria-label="Розмістити вікна" className="absolute left-[599px] top-[242px] w-[671px] rounded-t-[7px] border border-black bg-[#b9d1ea] px-[7px] pb-[7px] shadow-[inset_-1px_-1px_0_#34d2f0,inset_1px_1px_0_#fff]">
    <header className={`-mx-[6px] mt-px flex h-[29px] items-center rounded-t-[5px] bg-linear-to-b from-[#99b4d1] to-[#b9d1ea] pl-[8px] pr-[9px] pt-[5px] text-[11px] text-black ${UI}`}>
      <Icon name="sigmaPage" />
      <h2 className="ml-1">Розмістити вікна</h2>
      <Caption active />
    </header>
    <div className="border-2 border-b-white border-l-[#808080] border-r-white border-t-[#808080] bg-[#f0f0f0] px-[8px] pb-[8px] pt-[16px] text-[11px]">
      <fieldset className="border border-[#a0a0a0] pb-[7px] pl-[30px] pt-[27px] shadow-[1px_1px_0_#fff]">
        <legend className="-ml-[25px] px-[2px] leading-[14px]">Схема розміщення форм довідників, документів, журналів, обробок (окрім друкованих форм):</legend>
        <div className="grid grid-cols-[329px_1fr] gap-y-[36px]">
          {SCHEMES.map((s, i) => s ? (
            <div key={s.id} className="flex gap-[14px]">
              <div className="grid h-[58px] w-[80px] grid-cols-2 grid-rows-2 gap-[3px]">
                {s.tiles.map((t, k) => <Tile key={k} n={k + 1} className={t} />)}
              </div>
              <label className="flex h-[51px] items-center gap-[4px]">
                <input type="radio" name="scheme" defaultChecked={s.id === 'l'} className="h-[12px] w-[12px] appearance-none rounded-full border border-b-[#e3e3e3] border-l-[#808080] border-r-[#e3e3e3] border-t-[#808080] bg-white checked:bg-[radial-gradient(#000_2px,#fff_3px)]" />
                <span className={`px-px leading-[14px] ${s.id === 'l' ? 'outline-1 outline-dotted outline-black' : ''}`}>{s.text}</span>
              </label>
            </div>
          ) : <div key={i} />)}
        </div>
      </fieldset>
      <div className="mt-[22px] flex justify-between pl-[31px] pr-[34px]">
        <Push className="h-[24px] w-[82px]">Розмістити</Push>
        <Push className="h-[24px] w-[82px]">Закрити</Push>
      </div>
    </div>
  </div>
);

const TASKS = [['cardfile', 'Контрагенти (10.03.2026)'], ['sigmaPage', 'Розмістити вікна'], ['cardfile', 'Співробітники (10.03.2026)'], ['cardfile', 'Необоротні активи (10.03.2026)']];
const STATUS = [['', 'w-[28px]'], ['NUM', 'w-[35px]'], ['ТА: 01.01.2026  00:00:00', 'w-[156px]'], ['БП: 1 квартал 2026 р.', 'w-[156px]'], ['ТП:', 'w-[151px]']];

export default function App() {
  return (
    <div className="flex h-screen flex-col overflow-hidden bg-[#f0f0f0] font-['Liberation_Sans',Arial,sans-serif] text-black">
      <header className={`flex h-[23px] shrink-0 items-center bg-[#0078d7] pl-px text-[11px] text-white ${UI}`}>
        <Icon name="flag" />
        <h1 className="ml-[5px]">Підприємство - · : ФОП Адмінов В.С. v.345/14</h1>
        <div className="ml-auto flex">
          {['M.5 5.500h10', 'M.5 2.500h8v8h-8zM2.500 .5h8v8', 'M.5 .5l10 10M10.500 .5l-10 10'].map(d => (
            <button key={d} aria-label="Вікно" className="flex h-[21px] w-[46px] items-center justify-center">
              <svg width="11" height="11" viewBox="0 0 11 11" fill="none" stroke="#fff"><path d={d} /></svg>
            </button>
          ))}
        </div>
      </header>

      <nav className={`flex h-[20px] shrink-0 items-center gap-[15px] border-b-2 border-[#f0f0f0] bg-white pl-[6px] pt-[2px] text-[11px] ${UI}`}>
        {['Файл', 'Дії', 'Операції', 'Довідники', 'Документи', 'Журнали', 'Звіти', 'Сервіс', 'Вікна', 'Допомога'].map(m => (
          <button key={m}>{m}</button>
        ))}
      </nav>

      <div className="-ml-[3px] flex h-[31px] shrink-0 border-t border-[#a0a0a0] shadow-[inset_0_1px_0_#fff]">
        {ROW1.map(b => <Band key={b} items={b} />)}
      </div>
      <div className="flex h-[31px] shrink-0 border-b-2 border-t border-b-[#808080] border-t-[#a0a0a0] shadow-[inset_0_1px_0_#fff]">
        {ROW2.map(b => <Band key={b} items={b} wide />)}
      </div>

      <main className="relative flex min-h-0 flex-1 gap-[3px] bg-[#ababab] pb-1 pl-[2px] pr-[12px] pt-px">
        <div className="flex min-w-0 flex-1 pb-px">
          <CatalogWindow title="Необоротні активи (10.03.2026)" root="Необоротні активи" tree="w-[220px]" grid={ASSETS} hScroll="ml-[18px]">
            <Push className="w-[83px]"><span><u>З</u>акрити</span></Push>
            <Push className="ml-[5px] w-[83px]" disabled><span><u>І</u>сторія</span></Push>
            <Push className="ml-[34px] w-[134px]">Налаштування колонок</Push>
            <Push className="ml-[5px] w-[125px]" icon="history">Історія реєстрації</Push>
            <Push className="ml-1 w-[96px]">Друк довідника</Push>
            <Push className="ml-2 w-[159px]">Перенумерація інв. номерів</Push>
            <Push className="ml-[22px] h-[23px] w-[24px]" label="Надіслати"><Plane /></Push>
          </CatalogWindow>
        </div>

        <div className="flex min-w-0 flex-1 flex-col gap-[2px]">
          <CatalogWindow title="Співробітники (10.03.2026)" root="Співробітники" tree="w-[166px]" tools={STAFF_TOOLS} grid={STAFF}>
            <Push className="w-[79px]"><span><u>З</u>акрити</span></Push>
            <Push className="ml-[192px] w-[96px]">Друк довідника</Push>
            <Push className="ml-1 w-[78px]" disabled><span><u>І</u>сторія</span></Push>
            <Push className="ml-1 w-[134px]">Налаштування колонок</Push>
            <Push className="ml-1 w-[126px]" icon="history">Історія реєстрації</Push>
          </CatalogWindow>
          <CatalogWindow title="Контрагенти (10.03.2026)" root="Контрагенти" tree="w-[152px]" tools={PARTNER_TOOLS} grid={PARTNERS} hScroll="ml-[33px]">
            <Push className="w-[78px]"><span><u>З</u>акрити</span></Push>
            <Push className="ml-1 w-[83px]" disabled><span><u>І</u>сторія</span></Push>
            <Push className="ml-1 h-[22px] w-[23px]" label="Довідка"><Icon name="ball" /></Push>
            <Push className="ml-1 w-[134px]">Налаштування колонок</Push>
            <Push className="ml-1 w-[127px]" icon="history">Історія реєстрації</Push>
            <Push className="ml-1 w-[99px]">Друк довідника</Push>
            <Push className="ml-[5px] w-[126px]">Перевірка ЄДРПОУ</Push>
            <Push className="ml-1 w-[116px]" icon="sms">Відправити SMS</Push>
            <Push className="ml-[30px] h-[22px] w-[24px]" label="Надіслати"><Plane /></Push>
          </CatalogWindow>
        </div>

        <ArrangeDialog />
      </main>

      <div className={`flex h-[29px] shrink-0 gap-[2px] border-b border-t border-b-[#a0a0a0] border-t-white pb-[3px] pt-[5px] text-[11px] ${UI}`}>
        {TASKS.map(([icon, text]) => (
          <button
            key={text}
            className={`flex w-[317px] items-center gap-[3px] border pl-px ${
              icon === 'sigmaPage'
                ? 'border-b-white border-l-[#696969] border-r-white border-t-[#696969] font-bold shadow-[inset_1px_1px_0_#a0a0a0]'
                : 'border-b-[#696969] border-l-white border-r-[#696969] border-t-white shadow-[inset_-1px_-1px_0_#a0a0a0]'
            }`}
          >
            <Icon name={icon} />
            {text}
          </button>
        ))}
      </div>

      <footer className={`flex h-[19px] shrink-0 items-end gap-[2px] border-t border-white pl-px text-[11px] ${UI}`}>
        <p className="mr-auto leading-[17px]">Технічна підтримка: +38 (096) 107-97-13</p>
        {STATUS.map(([t, w]) => (
          <p key={w + t} className={`h-[16px] whitespace-pre border-l border-r border-t border-l-[#a0a0a0] border-r-white border-t-[#a0a0a0] pl-px leading-[15px] ${w}`}>{t}</p>
        ))}
      </footer>
    </div>
  );
}
